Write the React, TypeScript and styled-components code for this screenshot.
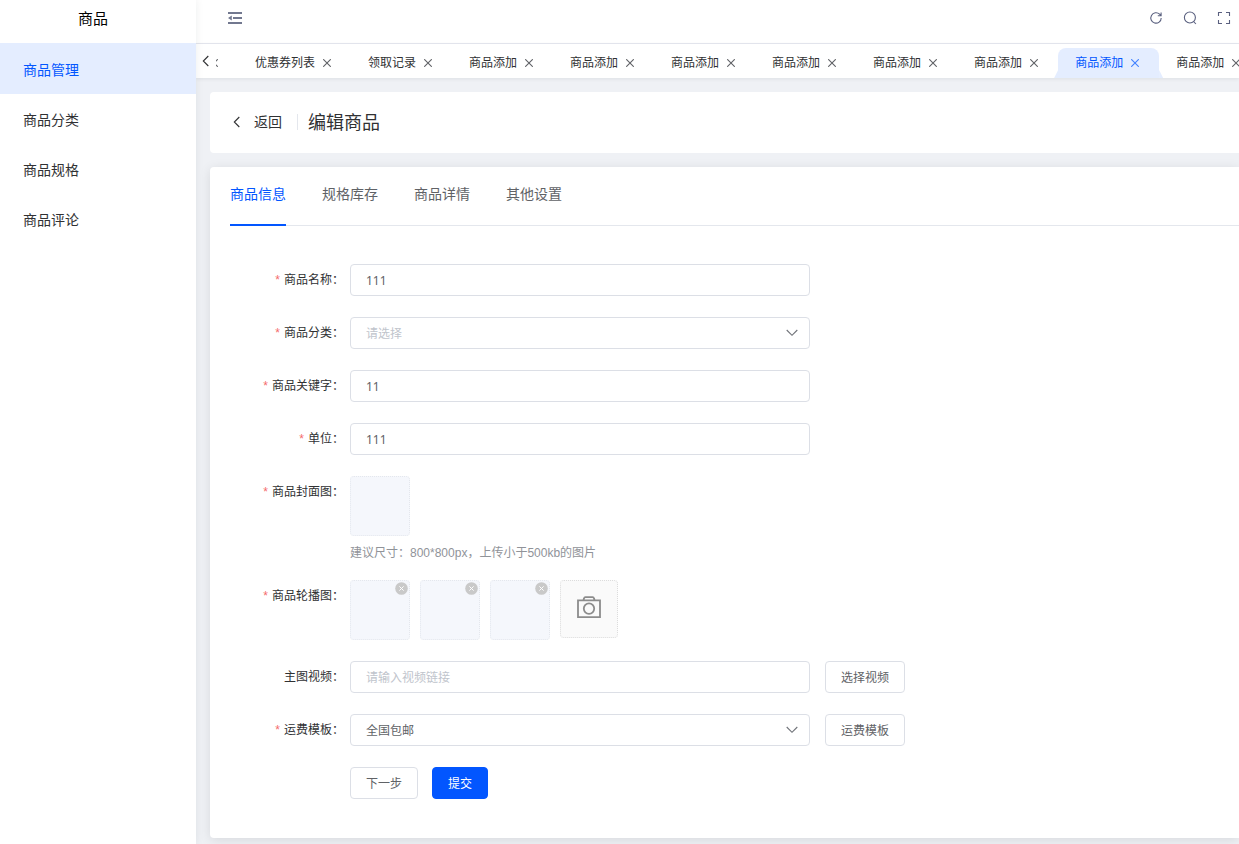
import React, { useState } from "react";
import styled, { createGlobalStyle, css } from "styled-components";

const blue = "#0256ff";
const paleBlue = "#e4edff";
const border = "#dcdfe6";

const GlobalStyle = createGlobalStyle`
  *, *::before, *::after { box-sizing: border-box; }
  body {
    margin: 0;
    font-family: "Noto Sans", "Noto Sans CJK SC", sans-serif;
    font-size: 12px;
    color: #303133;
    background: #eff1f5;
    overflow-x: hidden;
  }
  button, input, select { font-family: inherit; }
  ul { margin: 0; padding: 0; list-style: none; }
`;

const Page = styled.div`
  display: flex;
  min-height: 100vh;
`;

const Sidebar = styled.aside`
  flex: 0 0 196px;
  background: #fff;
  box-shadow: 0 0 8px rgba(29, 35, 41, 0.08);
  z-index: 1;
`;

const SidebarTitle = styled.h2`
  margin: 0;
  height: 44px;
  padding: 0 10px 0 0;
  border-bottom: 1px solid ${paleBlue};
  font-size: 15px;
  font-weight: 400;
  line-height: 36px;
  text-align: center;
  color: #000;
`;

const MenuLink = styled.a<{ $active?: boolean }>`
  display: block;
  height: 50px;
  padding: 2px 23px 0;
  font-size: 14px;
  line-height: 48px;
  text-decoration: none;
  color: ${(p) => (p.$active ? blue : "#303133")};
  background: ${(p) => (p.$active ? paleBlue : "transparent")};
`;

const Main = styled.div`
  flex: 1;
  min-width: 0;
  display: flex;
  flex-direction: column;
`;

const TopBar = styled.header`
  display: flex;
  align-items: center;
  justify-content: space-between;
  height: 44px;
  padding: 0 8px 8px 32px;
  background: #fff;
  border-bottom: 1px solid #e6e8f0;
`;

const Tools = styled.div`
  display: flex;
  gap: 20px;
`;

const IconButton = styled.button`
  display: flex;
  padding: 0;
  border: 0;
  background: none;
  color: #5a607f;
  cursor: pointer;
`;

const TabBar = styled.nav`
  display: flex;
  height: 34px;
  padding-left: 3px;
  background: #fff;
  box-shadow: 0 1px 4px rgba(0, 21, 41, 0.08);
`;

const ScrollButton = styled(IconButton)`
  flex: 0 0 17px;
  align-items: center;
  color: #303133;
`;

const TabViewport = styled.div`
  flex: 1;
  min-width: 0;
  overflow: hidden;
`;

const TabList = styled.ul`
  display: flex;
  margin-left: -31px;
  padding-top: 4px;
`;

const PageTab = styled.li<{ $active?: boolean }>`
  position: relative;
  flex: none;
  display: flex;
  align-items: center;
  gap: 4px;
  height: 30px;
  padding: 0 16px 0 17px;
  color: ${(p) => (p.$active ? blue : "#303133")};
  ${(p) =>
    p.$active &&
    css`
      background: ${paleBlue};
      border-radius: 8px 8px 0 0;
      &::before,
      &::after {
        content: "";
        position: absolute;
        bottom: 0;
        width: 4px;
        height: 8px;
        background: ${paleBlue};
      }
      &::before {
        right: 100%;
        clip-path: polygon(100% 0, 100% 100%, 0 100%);
      }
      &::after {
        left: 100%;
        clip-path: polygon(0 0, 100% 100%, 0 100%);
      }
    `}
`;

const PageTabLink = styled.a`
  color: inherit;
  text-decoration: none;
  line-height: 28px;
  white-space: nowrap;
`;

const TabClose = styled(IconButton)<{ $active?: boolean }>`
  width: 16px;
  height: 16px;
  align-items: center;
  justify-content: center;
  color: ${(p) => (p.$active ? "#4080ff" : "#606266")};
`;

const Content = styled.main`
  flex: 1;
  display: flex;
  flex-direction: column;
  gap: 14px;
  padding: 14px 0 6px 14px;
`;

const HeadingCard = styled.section`
  display: flex;
  align-items: center;
  height: 61px;
  padding: 0 20px 2px;
  background: #fff;
  border-radius: 4px 0 0 4px;
`;

const BackButton = styled(IconButton)`
  align-items: center;
  gap: 10px;
  font-size: 14px;
  line-height: 20px;
  color: #303133;
`;

const Title = styled.h1`
  margin: 0 0 0 15px;
  padding-left: 10px;
  border-left: 1px solid #e4e7ed;
  font-size: 18px;
  font-weight: 400;
  line-height: 16px;
  color: #303133;
`;

const FormCard = styled.section`
  flex: 1;
  padding: 0 0 38px 20px;
  background: #fff;
  border-radius: 4px 0 0 4px;
  box-shadow: 0 2px 12px rgba(0, 0, 0, 0.1);
`;

const SectionTabs = styled.div`
  display: flex;
  gap: 36px;
  height: 59px;
  box-shadow: inset 0 -1px #e4e7ed;
`;

const SectionTab = styled.button<{ $active?: boolean }>`
  padding: 0 0 4px;
  border: 0;
  border-bottom: 2px solid ${(p) => (p.$active ? blue : "transparent")};
  background: none;
  font-size: 14px;
  line-height: 52px;
  color: ${(p) => (p.$active ? blue : "#606266")};
  cursor: pointer;
`;

const Form = styled.form`
  display: flex;
  flex-direction: column;
  gap: 21px;
  padding-top: 38px;
`;

const Row = styled.div`
  display: flex;
  align-items: flex-start;
`;

const labelStyle = css`
  flex: 0 0 114px;
  margin-right: 6px;
  line-height: 32px;
  text-align: right;
  white-space: nowrap;
`;

const Label = styled.label`
  ${labelStyle}
`;

const GroupLabel = styled.span`
  ${labelStyle}
`;

const Star = styled.span`
  margin-right: 4px;
  font-family: "Liberation Sans", sans-serif;
  color: #f56c6c;
`;

const Control = styled.div`
  display: flex;
  flex: 1;
  gap: 15px;
  min-width: 0;
`;

const Actions = styled.div`
  display: flex;
  gap: 14px;
  padding-left: 120px;
`;

const Stack = styled.div`
  display: flex;
  flex-direction: column;
  gap: 11px;
`;

const fieldStyle = css`
  width: 100%;
  height: 32px;
  padding: 0 15px;
  border: 1px solid ${border};
  border-radius: 4px;
  background: #fff;
  font-size: 12px;
  color: #606266;
  outline: none;
  &:focus { border-color: ${blue}; }
`;

const Input = styled.input`
  ${fieldStyle}
  max-width: 460px;
  &::placeholder { color: #c0c4cc; opacity: 1; }
`;

const SelectWrap = styled.div`
  position: relative;
  width: 100%;
  max-width: 460px;
`;

const Select = styled.select<{ $empty?: boolean }>`
  ${fieldStyle}
  display: block;
  appearance: none;
  color: ${(p) => (p.$empty ? "#c0c4cc" : "#606266")};
`;

const SelectArrow = styled.svg`
  position: absolute;
  top: 12px;
  right: 12px;
  pointer-events: none;
`;

const Button = styled.button<{ $primary?: boolean }>`
  flex: none;
  height: 32px;
  padding: 0 15px;
  border: 1px solid ${(p) => (p.$primary ? blue : border)};
  border-radius: 4px;
  background: ${(p) => (p.$primary ? blue : "#fff")};
  color: ${(p) => (p.$primary ? "#fff" : "#606266")};
  font-size: 12px;
  cursor: pointer;
`;

const Hint = styled.p`
  margin: 0;
  font-family: "Liberation Sans", "Noto Sans CJK SC", sans-serif;
  font-size: 12px;
  line-height: 12px;
  color: #909399;
`;

const Thumbs = styled.div`
  display: flex;
  gap: 10px;
`;

const Thumb = styled.div`
  position: relative;
  width: 60px;
  height: 60px;
  border: 1px dotted #e4e7ed;
  border-radius: 4px;
  background: #f5f7fc;
`;

const RemoveButton = styled.button`
  position: absolute;
  top: 1px;
  right: 1px;
  display: flex;
  padding: 0;
  border: 0;
  background: none;
  cursor: pointer;
`;

const UploadButton = styled.button`
  display: flex;
  align-items: center;
  justify-content: center;
  width: 58px;
  height: 58px;
  padding: 0 0 4px;
  border: 1px dotted #dcdcdc;
  border-radius: 4px;
  background: #fafafa;
  cursor: pointer;
`;

const CloseIcon = () => (
  <svg width="8" height="8" viewBox="0 0 8 8" fill="none" stroke="currentColor" strokeWidth="1.1">
    <path d="M.2.2l7.6 7.6M7.8.2L.2 7.8" />
  </svg>
);

const ChevronLeft = () => (
  <svg width="14" height="14" viewBox="0 0 14 14" fill="none" stroke="currentColor" strokeWidth="1.1">
    <path d="M9.3 2L4.3 7l5 5" />
  </svg>
);

const FoldIcon = () => (
  <svg width="14" height="12" viewBox="0 0 14 12" fill="#72788f">
    <path d="M0 0h14v2H0zM5 5h9v2H5zM0 10h14v2H0zM0 6l3.8-2.4v4.8z" />
  </svg>
);

const RefreshIcon = () => (
  <svg width="14" height="14" viewBox="0 0 14 14" fill="none" stroke="currentColor" strokeWidth="1.1">
    <path d="M12.2 7A5.2 5.2 0 1 1 10.6 3.2L12 4.6M12.1 1.4v3.3H8.8" />
  </svg>
);

const SearchIcon = () => (
  <svg width="14" height="14" viewBox="0 0 14 14" fill="none" stroke="currentColor" strokeWidth="1.1">
    <circle cx="6.9" cy="6.5" r="5.5" />
    <path d="M10.6 10.5l2.3 2.5" />
  </svg>
);

const FullscreenIcon = () => (
  <svg width="14" height="14" viewBox="0 0 14 14" fill="none" stroke="currentColor" strokeWidth="1.1">
    <path d="M1.5 5V1.5H5M9 1.5h3.5V5M12.5 9v3.5H9M5 12.5H1.5V9" />
  </svg>
);

const RemoveIcon = () => (
  <svg width="13" height="13" viewBox="0 0 13 13">
    <circle cx="6.5" cy="6.5" r="6.3" fill="#c9c9c9" />
    <path d="M4.4 4.4l4.2 4.2M8.6 4.4L4.4 8.6" stroke="#fff" />
  </svg>
);

const CameraIcon = () => (
  <svg width="24" height="22" viewBox="0 0 24 22" fill="none" stroke="#8c8c8c" strokeWidth="1.8">
    <path d="M1 4.4h22v16.8H1zM6.4 4.2l.6-1.8Q7.3 1.2 8.4 1.2h7.2q1.1 0 1.4 1.2l.6 1.8" />
    <circle cx="12" cy="12.6" r="5.2" />
  </svg>
);

const DownArrow = () => (
  <SelectArrow width="12" height="8" viewBox="0 0 12 8" fill="none" stroke="#707379" strokeWidth="1.1">
    <path d="M.7 1L6 6.3 11.3 1" />
  </SelectArrow>
);

const menu = ["商品管理", "商品分类", "商品规格", "商品评论"];
const pages = ["优惠券列表", "领取记录", ...Array(8).fill("商品添加")];
const activePage = 8;
const sections = ["商品信息", "规格库存", "商品详情", "其他设置"];

export default function App() {
  const [section, setSection] = useState(0);
  const [category, setCategory] = useState("");

  return (
    <>
      <GlobalStyle />
      <Page>
        <Sidebar>
          <SidebarTitle>商品</SidebarTitle>
          <nav>
            {menu.map((name, i) => (
              <MenuLink key={name} href="#" $active={i === 0}>{name}</MenuLink>
            ))}
          </nav>
        </Sidebar>
        <Main>
          <TopBar>
            <IconButton aria-label="收起菜单"><FoldIcon /></IconButton>
            <Tools>
              <IconButton aria-label="刷新"><RefreshIcon /></IconButton>
              <IconButton aria-label="搜索"><SearchIcon /></IconButton>
              <IconButton aria-label="全屏"><FullscreenIcon /></IconButton>
            </Tools>
          </TopBar>
          <TabBar>
            <ScrollButton aria-label="向左滚动"><ChevronLeft /></ScrollButton>
            <TabViewport>
              <TabList>
                <PageTab>
                  <span />
                  <TabClose aria-label="关闭"><CloseIcon /></TabClose>
                </PageTab>
                {pages.map((name, i) => (
                  <PageTab key={i} $active={i === activePage}>
                    <PageTabLink href="#">{name}</PageTabLink>
                    <TabClose aria-label="关闭" $active={i === activePage}><CloseIcon /></TabClose>
                  </PageTab>
                ))}
              </TabList>
            </TabViewport>
          </TabBar>
          <Content>
            <HeadingCard>
              <BackButton><ChevronLeft />返回</BackButton>
              <Title>编辑商品</Title>
            </HeadingCard>
            <FormCard>
              <SectionTabs role="tablist">
                {sections.map((name, i) => (
                  <SectionTab
                    key={name}
                    role="tab"
                    aria-selected={i === section}
                    $active={i === section}
                    onClick={() => setSection(i)}
                  >
                    {name}
                  </SectionTab>
                ))}
              </SectionTabs>
              <Form onSubmit={(e) => e.preventDefault()}>
                <Row>
                  <Label htmlFor="name"><Star>*</Star>商品名称：</Label>
                  <Control><Input id="name" defaultValue="111" /></Control>
                </Row>
                <Row>
                  <Label htmlFor="category"><Star>*</Star>商品分类：</Label>
                  <Control>
                    <SelectWrap>
                      <Select
                        id="category"
                        value={category}
                        $empty={!category}
                        onChange={(e) => setCategory(e.target.value)}
                      >
                        <option value="">请选择</option>
                      </Select>
                      <DownArrow />
                    </SelectWrap>
                  </Control>
                </Row>
                <Row>
                  <Label htmlFor="keyword"><Star>*</Star>商品关键字：</Label>
                  <Control><Input id="keyword" defaultValue="11" /></Control>
                </Row>
                <Row>
                  <Label htmlFor="unit"><Star>*</Star>单位：</Label>
                  <Control><Input id="unit" defaultValue="111" /></Control>
                </Row>
                <Row>
                  <GroupLabel><Star>*</Star>商品封面图：</GroupLabel>
                  <Stack>
                    <Thumb />
                    <Hint>建议尺寸：800*800px，上传小于500kb的图片</Hint>
                  </Stack>
                </Row>
                <Row>
                  <GroupLabel><Star>*</Star>商品轮播图：</GroupLabel>
                  <Thumbs>
                    {[0, 1, 2].map((i) => (
                      <Thumb key={i}>
                        <RemoveButton type="button" aria-label="删除图片"><RemoveIcon /></RemoveButton>
                      </Thumb>
                    ))}
                    <UploadButton type="button" aria-label="上传图片"><CameraIcon /></UploadButton>
                  </Thumbs>
                </Row>
                <Row>
                  <Label htmlFor="video">主图视频：</Label>
                  <Control>
                    <Input id="video" placeholder="请输入视频链接" />
                    <Button type="button">选择视频</Button>
                  </Control>
                </Row>
                <Row>
                  <Label htmlFor="freight"><Star>*</Star>运费模板：</Label>
                  <Control>
                    <SelectWrap>
                      <Select id="freight"><option>全国包邮</option></Select>
                      <DownArrow />
                    </SelectWrap>
                    <Button type="button">运费模板</Button>
                  </Control>
                </Row>
                <Actions>
                  <Button type="button">下一步</Button>
                  <Button type="submit" $primary>提交</Button>
                </Actions>
              </Form>
            </FormCard>
          </Content>
        </Main>
      </Page>
    </>
  );
}
